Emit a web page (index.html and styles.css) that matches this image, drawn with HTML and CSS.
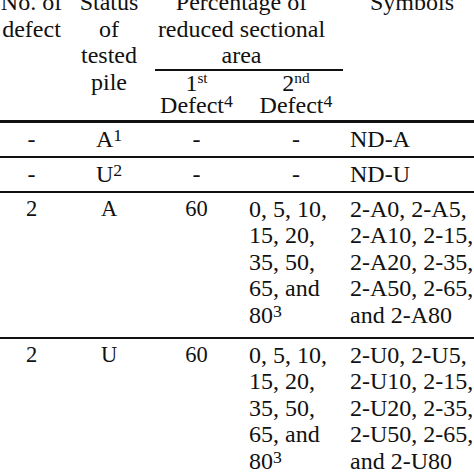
FILE: index.html
```html
<!DOCTYPE html>
<html lang="en">
<head>
<meta charset="utf-8">
<title>Defect table</title>
<link rel="stylesheet" href="styles.css">
</head>
<body>
<table class="defects">
  <colgroup>
    <col class="w1"><col class="w2"><col class="w3"><col class="w4"><col class="w5">
  </colgroup>
  <thead>
    <tr>
      <th rowspan="2" class="h">No. of<br>defect</th>
      <th rowspan="2" class="h">Status<br>of<br>tested<br>pile</th>
      <th colspan="2" class="h group">Percentage of<br>reduced sectional<br>area</th>
      <th rowspan="2" class="h sym-head">Symbols</th>
    </tr>
    <tr>
      <th class="sub">1<sup class="ord">st</sup><br>Defect<sup>4</sup></th>
      <th class="sub second">2<sup class="ord">nd</sup><br>Defect<sup>4</sup></th>
    </tr>
  </thead>
  <tbody>
    <tr class="short">
      <td>-</td>
      <td>A<sup>1</sup></td>
      <td>-</td>
      <td class="pct mid">-</td>
      <td class="sym">ND-A</td>
    </tr>
    <tr class="short">
      <td>-</td>
      <td>U<sup>2</sup></td>
      <td>-</td>
      <td class="pct mid">-</td>
      <td class="sym">ND-U</td>
    </tr>
    <tr class="tall">
      <td class="alt">2</td>
      <td class="alt">A</td>
      <td class="alt">60</td>
      <td class="pct">0, 5, 10,<br>15, 20,<br>35, 50,<br>65, and<br>80<sup>3</sup></td>
      <td class="sym">2-A0, 2-A5,<br>2-A10, 2-15,<br>2-A20, 2-35,<br>2-A50, 2-65,<br>and 2-A80</td>
    </tr>
    <tr class="tall">
      <td class="alt">2</td>
      <td class="alt">U</td>
      <td class="alt">60</td>
      <td class="pct">0, 5, 10,<br>15, 20,<br>35, 50,<br>65, and<br>80<sup>3</sup></td>
      <td class="sym">2-U0, 2-U5,<br>2-U10, 2-15,<br>2-U20, 2-35,<br>2-U50, 2-65,<br>and 2-U80</td>
    </tr>
  </tbody>
</table>
</body>
</html>
```

FILE: styles.css
```css
html, body {
  margin: 0;
  padding: 0;
  background: #fff;
  overflow: hidden;
}

.defects {
  width: 474px;
  margin-top: -11px;
  table-layout: fixed;
  border-collapse: separate;
  border-spacing: 0;
  font-family: "Liberation Serif", "Times New Roman", serif;
  font-size: 24px;
  color: #111;
}

.w1 { width: 63px; }
.w2 { width: 92px; }
.w3 { width: 83px; }
.w4 { width: 105px; }
.w5 { width: 131px; }

.defects th,
.defects td {
  padding: 0;
  font-weight: normal;
  text-align: center;
  vertical-align: top;
  white-space: nowrap;
}

.defects sup {
  font-size: 0.74em;
  line-height: 0;
  vertical-align: 0.32em;
}

.defects sup.ord {
  font-size: 0.64em;
  vertical-align: 0.5em;
}

/* header */
.defects th.h {
  line-height: 26.7px;
  border-bottom: 3px solid #111;
}

.defects th.group {
  padding-right: 15px;
  border-bottom: 2px solid #111;
}

.defects th.sym-head {
  padding-left: 7px;
}

.defects th.sub {
  line-height: 22px;
  padding-top: 1px;
  padding-bottom: 4px;
  border-bottom: 3px solid #111;
}

.defects th.second {
  padding-left: 11px;
}

/* body */
.defects td {
  line-height: 26.5px;
  border-bottom: 2px solid #111;
}

.short td {
  padding-top: 2.5px;
  padding-bottom: 4px;
}

.tall td {
  padding-top: 2.5px;
  padding-bottom: 9px;
}

.defects td.alt {
  font-size: 22.5px;
}

.defects td.pct {
  padding-left: 11px;
  text-align: left;
}

.defects td.pct.mid {
  text-align: center;
}

.defects td.sym {
  padding-left: 7px;
  text-align: left;
}
```
